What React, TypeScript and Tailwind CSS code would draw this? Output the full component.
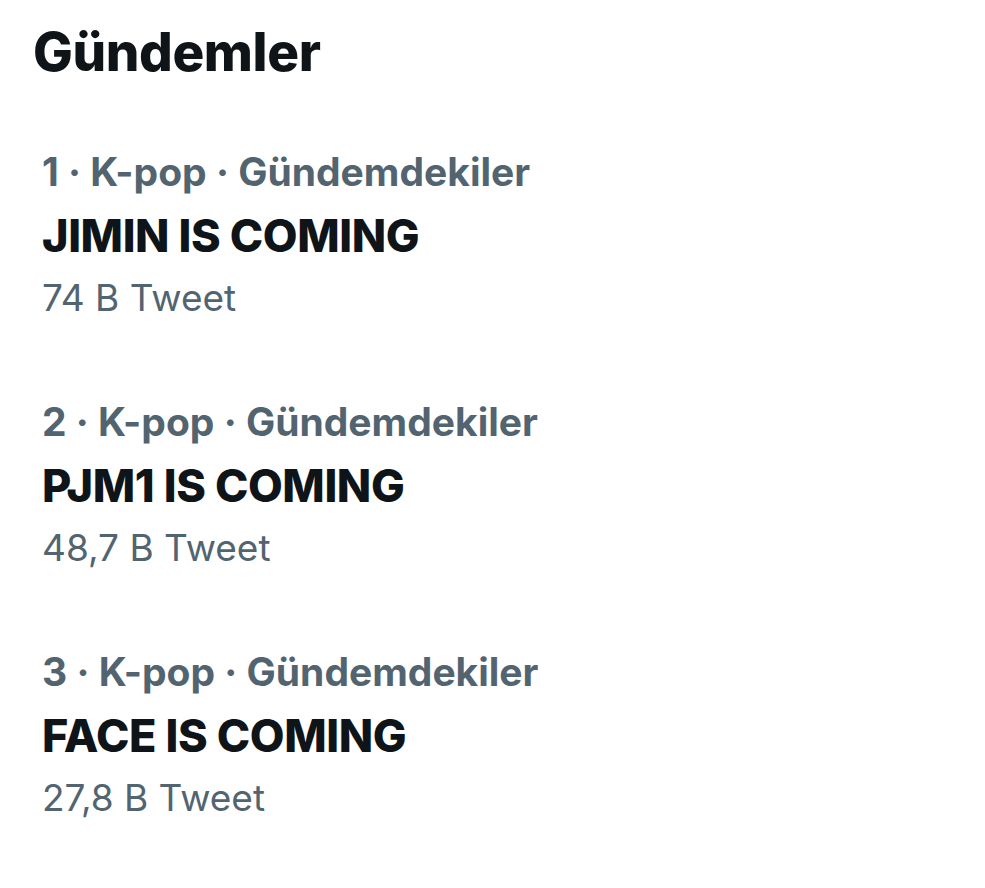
const trends = [
  { rank: 1, category: "K-pop", name: "JIMIN IS COMING", count: "74 B Tweet" },
  { rank: 2, category: "K-pop", name: "PJM1 IS COMING", count: "48,7 B Tweet" },
  { rank: 3, category: "K-pop", name: "FACE IS COMING", count: "27,8 B Tweet" },
]

export default function App() {
  return (
    <div
      className="w-[985px] h-[888px] bg-white text-[#0f1419]"
      style={{ fontFamily: "Inter, 'Noto Sans', sans-serif" }}
    >
      <div className="px-[33px] pt-[22px]">
        <h2 className="text-[53px] leading-[60px] font-extrabold tracking-[-0.4px]">Gündemler</h2>
      </div>

      <div className="mt-[70px]">
        {trends.map((t) => (
          <div key={t.rank} className="px-[42px] h-[250px]">
            <div className="text-[39px] leading-[40px] font-bold text-[#536471]">
              {t.rank} · {t.category} · Gündemdekiler
            </div>
            <div className="mt-[22px] text-[45px] leading-[44px] font-extrabold tracking-[-0.4px]">
              {t.name}
            </div>
            <div className="mt-[20px] text-[37px] leading-[40px] text-[#536471]">{t.count}</div>
          </div>
        ))}
      </div>
    </div>
  )
}
